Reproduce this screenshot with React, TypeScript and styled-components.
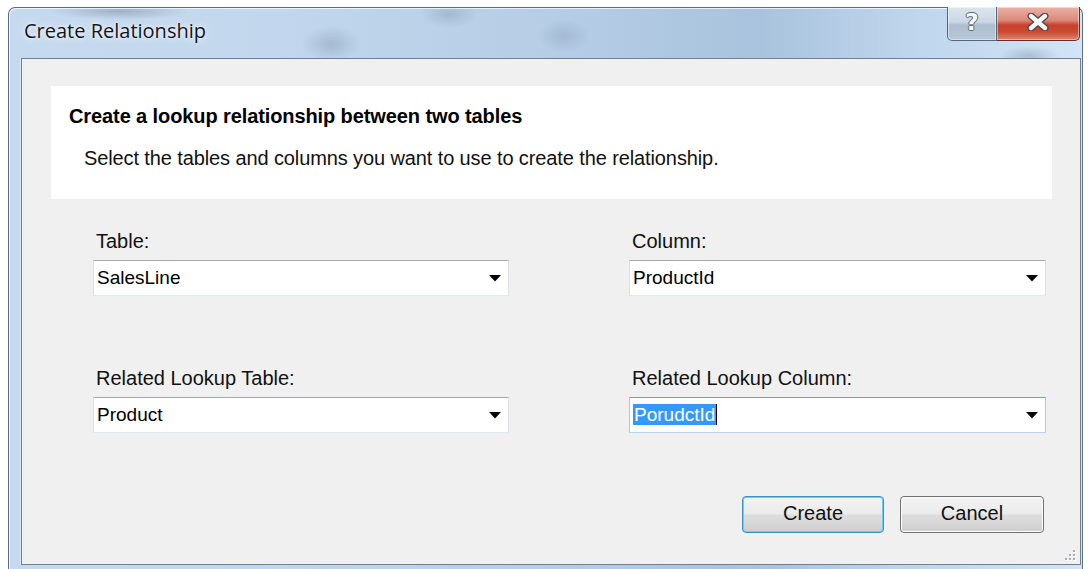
import styled, { createGlobalStyle } from "styled-components";

const GlobalStyle = createGlobalStyle`
  html, body {
    margin: 0;
    background: #ffffff;
    overflow: hidden;
  }
  body {
    font-family: "Liberation Sans", Arial, sans-serif;
    color: #000;
  }
`;

const Window = styled.div`
  position: relative;
  box-sizing: border-box;
  width: 1075px;
  height: 575px;
  margin: 7px 0 0 8px;
  padding: 0 1px 0 12px;
  border: 1px solid #5d6e80;
  border-bottom: none;
  border-radius: 7px 7px 0 0;
  display: flex;
  flex-direction: column;
  background:
    radial-gradient(ellipse 70px 9px at 110px 3px, rgba(70, 85, 105, 0.3), transparent),
    radial-gradient(ellipse 30px 18px at 322px 36px, rgba(70, 90, 115, 0.22), transparent),
    radial-gradient(ellipse 28px 14px at 440px 6px, rgba(70, 90, 115, 0.2), transparent),
    radial-gradient(ellipse 26px 16px at 555px 28px, rgba(70, 90, 115, 0.16), transparent),
    radial-gradient(ellipse 30px 10px at 1020px 48px, rgba(70, 90, 115, 0.25), transparent),
    linear-gradient(90deg, #c6daef 0%, #c2d7ed 25%, #b3cbe4 55%, #a9c3de 70%, #c0d6ec 85%, #d2e4f6 100%);
  box-shadow: inset 1px 1px 0 rgba(255, 255, 255, 0.7);
`;

const TitleBar = styled.div`
  height: 50px;
  display: flex;
  align-items: flex-start;
  flex-shrink: 0;
`;

const Caption = styled.div`
  padding: 10px 0 0 3px;
  font-family: "Open Sans", "Noto Sans", sans-serif;
  font-size: 20px;
  line-height: 26px;
  color: #14141c;
  text-shadow: 0 0 8px rgba(255, 255, 255, 0.9), 0 0 3px rgba(255, 255, 255, 0.9);
`;

const CaptionButtons = styled.div`
  display: flex;
  margin: -1px 1px 0 auto;
`;

const CaptionButton = styled.div<{ $close?: boolean }>`
  box-sizing: border-box;
  height: 34px;
  width: ${(p) => (p.$close ? "83px" : "50px")};
  display: flex;
  align-items: center;
  justify-content: center;
  padding-bottom: 3px;
  border: 1px solid ${(p) => (p.$close ? "#6b2b22" : "#56677a")};
  border-top: none;
  border-left-width: ${(p) => (p.$close ? "0" : "1px")};
  border-radius: ${(p) => (p.$close ? "0 0 5px 0" : "0 0 0 5px")};
  background: ${(p) =>
    p.$close
      ? "linear-gradient(180deg, #eab2a6 0%, #dc8a7a 40%, #c7422c 55%, #c94a33 75%, #e0866f 100%)"
      : "linear-gradient(180deg, #dbe5ef 0%, #cbd7e4 45%, #aebfd0 55%, #b6c7d8 100%)"};
  box-shadow: inset 0 0 0 1px rgba(255, 255, 255, 0.45);
`;

const HelpMark = styled.span`
  font-family: "DejaVu Sans", sans-serif;
  font-weight: bold;
  font-size: 23px;
  line-height: 24px;
  color: #f4f6f8;
  text-shadow: 1px 0 0 #62676e, -1px 0 0 #62676e, 0 1px 0 #62676e, 0 -1px 0 #62676e;
`;

const Client = styled.div`
  position: relative;
  box-sizing: border-box;
  width: 1060px;
  height: 507px;
  padding: 27px 28px 0 29px;
  border: 1px solid #6f8092;
  background: #f0f0f0;
  display: flex;
  flex-direction: column;
  box-shadow: -1px 0 0 #dce8f5;
`;

const Banner = styled.div`
  height: 113px;
  box-sizing: border-box;
  padding: 19px 18px 0;
  background: #ffffff;
`;

const Heading = styled.div`
  font-weight: bold;
  font-size: 20px;
  line-height: 22px;
  letter-spacing: -0.1px;
`;

const Subheading = styled.div`
  margin-top: 20px;
  padding-left: 15px;
  font-size: 20px;
  line-height: 22px;
  letter-spacing: -0.11px;
  color: #111;
`;

const FieldGrid = styled.div`
  display: grid;
  grid-template-columns: 416px 417px;
  column-gap: 120px;
  row-gap: 71px;
  padding: 31px 0 0 42px;
`;

const Field = styled.div`
  display: flex;
  flex-direction: column;
  gap: 8px;
`;

const Label = styled.div`
  padding-left: 3px;
  font-size: 20px;
  line-height: 22px;
  color: #111;
`;

const Combo = styled.div<{ $focused?: boolean }>`
  box-sizing: border-box;
  height: 36px;
  display: flex;
  align-items: center;
  padding: 0 7px 0 3px;
  background: #ffffff;
  border: 1px solid;
  border-color: ${(p) =>
    p.$focused ? "#6a9fd6 #a9caec #b7d4f1 #a9caec" : "#a4a7ad #dde0e6 #e3e9ef #dde0e6"};
  font-size: 19px;
`;

const ComboText = styled.span`
  flex: 1;
  line-height: 22px;
`;

const Selected = styled.span`
  background: #3399ff;
  color: #ffffff;
  padding: 0 1px;
  border-right: 1px solid #000;
`;

const Arrow = () => (
  <svg width="12" height="7" viewBox="0 0 12 7">
    <polygon points="0,0 12,0 6,6.5" fill="#000" />
  </svg>
);

const ButtonRow = styled.div`
  margin: auto 8px 31px 0;
  display: flex;
  justify-content: flex-end;
  gap: 16px;
`;

const Button = styled.button<{ $default?: boolean }>`
  box-sizing: border-box;
  width: ${(p) => (p.$default ? "142px" : "144px")};
  height: 37px;
  font-family: "Liberation Sans", Arial, sans-serif;
  font-size: 20px;
  color: #111;
  border-radius: 4px;
  border: 1px solid ${(p) => (p.$default ? "#3d8fc4" : "#707070")};
  background: linear-gradient(180deg, #f3f3f3 0%, #ebebeb 48%, #dddddd 52%, #cfcfcf 100%);
  box-shadow: inset 0 0 0 1px ${(p) => (p.$default ? "#6ccdf5" : "#fcfcfc")};
  padding: 0 0 2px;
`;

const SizeGrip = styled.svg`
  position: absolute;
  right: 4px;
  bottom: 3px;
`;

const gripDots = [
  [10, 0],
  [10, 4],
  [6, 4],
  [10, 8],
  [6, 8],
  [2, 8],
];

export default function App() {
  return (
    <>
      <GlobalStyle />
      <Window>
        <TitleBar>
          <Caption>Create Relationship</Caption>
          <CaptionButtons>
            <CaptionButton>
              <HelpMark>?</HelpMark>
            </CaptionButton>
            <CaptionButton $close>
              <svg width="28" height="18" viewBox="0 0 28 18">
                <path d="M7 3 L21 15 M21 3 L7 15" stroke="#4f4543" strokeWidth="7" strokeLinecap="round" />
                <path d="M7 3 L21 15 M21 3 L7 15" stroke="#f6f6f6" strokeWidth="4.4" strokeLinecap="round" />
              </svg>
            </CaptionButton>
          </CaptionButtons>
        </TitleBar>

        <Client>
          <Banner>
            <Heading>Create a lookup relationship between two tables</Heading>
            <Subheading>
              Select the tables and columns you want to use to create the relationship.
            </Subheading>
          </Banner>

          <FieldGrid>
            <Field>
              <Label>Table:</Label>
              <Combo>
                <ComboText>SalesLine</ComboText>
                <Arrow />
              </Combo>
            </Field>
            <Field>
              <Label>Column:</Label>
              <Combo>
                <ComboText>ProductId</ComboText>
                <Arrow />
              </Combo>
            </Field>
            <Field>
              <Label>Related Lookup Table:</Label>
              <Combo>
                <ComboText>Product</ComboText>
                <Arrow />
              </Combo>
            </Field>
            <Field>
              <Label>Related Lookup Column:</Label>
              <Combo $focused>
                <ComboText>
                  <Selected>PorudctId</Selected>
                </ComboText>
                <Arrow />
              </Combo>
            </Field>
          </FieldGrid>

          <ButtonRow>
            <Button $default>Create</Button>
            <Button>Cancel</Button>
          </ButtonRow>

          <SizeGrip width="13" height="11" viewBox="0 0 13 11">
            {gripDots.map(([x, y]) => (
              <g key={`${x}-${y}`}>
                <rect x={x + 1} y={y + 1} width="2" height="2" fill="#ffffff" />
                <rect x={x} y={y} width="2" height="2" fill="#a8acb2" />
              </g>
            ))}
          </SizeGrip>
        </Client>
      </Window>
    </>
  );
}
